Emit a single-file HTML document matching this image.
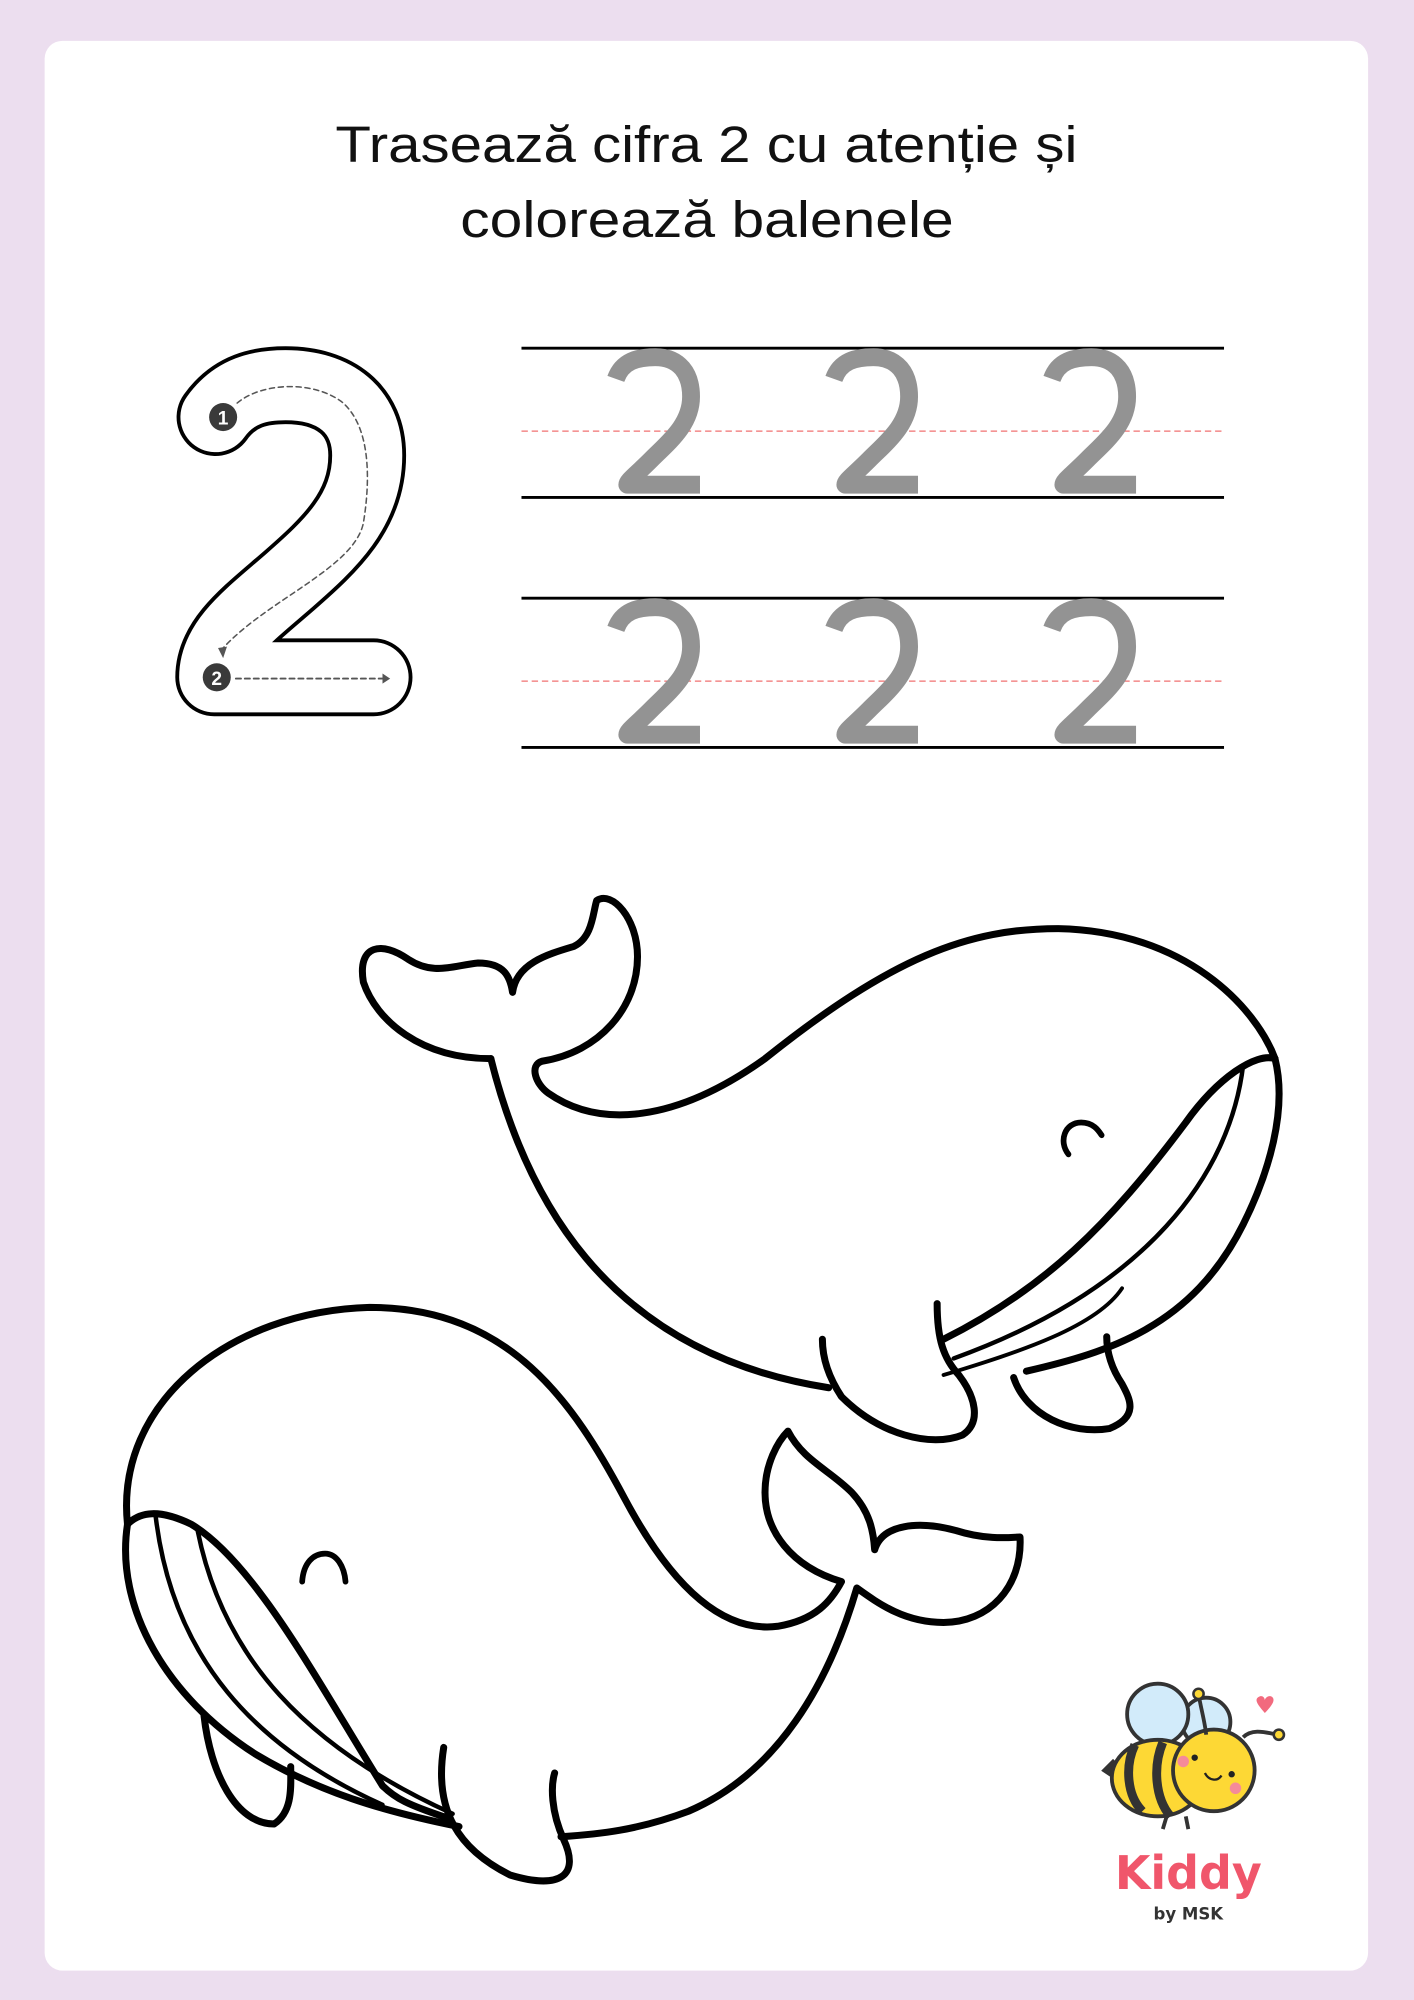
<!DOCTYPE html>
<html><head><meta charset="utf-8"><style>
html,body{margin:0;padding:0;background:#ecdeef;}
svg{display:block}
</style></head><body>
<svg width="1414" height="2000" viewBox="0 0 1109 1568" preserveAspectRatio="none" xmlns="http://www.w3.org/2000/svg">
<rect x="0" y="0" width="1109" height="1568" fill="#ecdeef"/>
<rect x="35" y="32" width="1038" height="1513" rx="14" fill="#ffffff"/>
<g font-family="Liberation Sans, DejaVu Sans, sans-serif" font-size="40" fill="#111">
<text x="263" y="127" textLength="582" lengthAdjust="spacingAndGlyphs">Trasează cifra 2 cu atenție și</text>
<text x="361" y="186" textLength="387" lengthAdjust="spacingAndGlyphs">colorează balenele</text>
</g>
<!-- big outlined 2 -->
<g fill="none" stroke-linecap="round" stroke-linejoin="round">
<path d="M169,327 C184,306 204,302 224,302 C263,302 288,322 288,357 C288,400 259,427 227,455 C196,482 168,502 168,531 L293,531" stroke="#000" stroke-width="61"/>
<path d="M169,327 C184,306 204,302 224,302 C263,302 288,322 288,357 C288,400 259,427 227,455 C196,482 168,502 168,531 L293,531" stroke="#fff" stroke-width="55"/>
<path d="M186,316 C205,300 245,298 268,315 C292,335 290,380 285,410 C278,445 210,470 175,508" stroke="#555" stroke-width="1.2" stroke-dasharray="4,3"/>
<path d="M185,532 L300,532" stroke="#555" stroke-width="1.5" stroke-dasharray="4,3"/>
</g>
<path d="M300,528 L306,532 L300,536 Z" fill="#555"/>
<path d="M171,508 L175,516 L178,507 Z" fill="#555"/>
<circle cx="175" cy="327" r="11" fill="#3a3a3a"/>
<text x="175" y="333" font-family="Liberation Sans, sans-serif" font-weight="bold" font-size="15" fill="#fff" text-anchor="middle">1</text>
<circle cx="170" cy="531" r="11" fill="#3a3a3a"/>
<text x="170" y="537" font-family="Liberation Sans, sans-serif" font-weight="bold" font-size="15" fill="#fff" text-anchor="middle">2</text>
<!-- lines -->
<g stroke="#000" stroke-width="2.2">
<line x1="409" y1="273" x2="960" y2="273"/><line x1="409" y1="390" x2="960" y2="390"/>
<line x1="409" y1="469" x2="960" y2="469"/><line x1="409" y1="586" x2="960" y2="586"/>
</g>
<g stroke="#f07070" stroke-width="1" stroke-dasharray="5,3">
<line x1="409" y1="338" x2="960" y2="338"/><line x1="409" y1="534" x2="960" y2="534"/>
</g>
<defs>
<path id="g2" d="M7,24 C12,10 24,7 38,7 C57,7 66,20 66,38 C66,60 48,74 35,87 C22,100 16,104 16,107 L73,107" fill="none" stroke="#939393" stroke-width="14" stroke-linejoin="round"/>
</defs>
<use href="#g2" x="476" y="273"/><use href="#g2" x="647" y="273"/><use href="#g2" x="818" y="273"/>
<use href="#g2" x="476" y="469"/><use href="#g2" x="647" y="469"/><use href="#g2" x="818" y="469"/>
<!-- whales -->
<g fill="none" stroke="#000" stroke-width="5.5" stroke-linecap="round" stroke-linejoin="round">
<path d="M385,830 C330,830 295,800 285,770 C280,740 300,738 320,752 C340,765 355,757 375,755 C395,755 400,765 402,778 C405,755 430,748 450,742 C465,735 465,715 468,706 C480,698 500,720 500,750 C500,790 470,825 425,832 C415,835 420,850 430,857 C470,885 530,880 600,830 C700,750 760,728 830,728 C930,730 985,790 1000,830"/>
<path d="M385,830 C410,930 470,1060 650,1088"/>
<path d="M1000,830 C1010,870 995,920 975,960 C935,1040 870,1060 805,1075"/>
<path d="M1000,830 C985,825 955,845 930,880 C870,960 820,1010 740,1050"/>
<path d="M975,835 C965,920 900,1010 748,1065" stroke-width="3.5"/>
<path d="M740,1078 C800,1060 860,1040 880,1010" stroke-width="3"/>
<path d="M735,1022 C735,1050 740,1065 752,1078 C765,1095 770,1115 755,1125 C730,1135 690,1125 660,1095 C650,1080 645,1065 645,1050"/>
<path d="M795,1080 C805,1110 840,1125 870,1120 C895,1110 885,1095 880,1085 C872,1073 868,1060 868,1048"/>
<path d="M838,905 C830,895 835,880 848,880 C858,880 862,887 864,890" stroke-width="4.5"/>
<path d="M100,1195 C90,1100 180,1028 290,1025 C400,1025 450,1100 490,1175 C530,1250 570,1280 610,1275 C640,1270 652,1255 660,1240 C620,1228 600,1200 600,1170 C600,1148 610,1130 618,1122 C630,1145 650,1152 668,1170 C682,1185 685,1200 686,1215 C692,1195 720,1192 750,1200 C775,1208 795,1205 800,1205 C802,1245 775,1272 740,1272 C710,1272 690,1258 672,1245 C650,1320 610,1390 540,1420 C500,1435 470,1438 440,1440"/>
<path d="M100,1195 C90,1260 130,1330 200,1375 C250,1405 300,1420 360,1432"/>
<path d="M100,1195 C110,1185 125,1183 150,1195 C200,1225 250,1320 300,1400 C310,1410 320,1415 350,1425" />
<path d="M122,1188 C135,1300 200,1370 300,1415" stroke-width="3.5"/>
<path d="M155,1200 C175,1300 240,1370 355,1422" stroke-width="3.5"/>
<path d="M160,1345 C165,1390 185,1430 215,1430 C230,1420 228,1400 228,1385"/>
<path d="M348,1370 C340,1420 360,1450 400,1470 C440,1482 455,1470 442,1442 C432,1420 432,1400 435,1390"/>
<path d="M237,1240 C238,1225 246,1218 255,1218 C264,1218 270,1228 271,1240" stroke-width="4.5"/>
</g>
<!-- bee logo -->
<g stroke="#333" stroke-width="3">
<circle cx="946" cy="1350" r="19" fill="#d2ebfa"/>
<circle cx="908" cy="1344" r="24" fill="#d2ebfa"/>
<path d="M872,1392 L866,1388 L874,1380" fill="#333"/>
<ellipse cx="908" cy="1394" rx="36" ry="30" fill="#fdd835"/>
<path d="M890,1368 C882,1385 884,1408 896,1420 M912,1366 C904,1385 906,1410 918,1424" stroke-width="7" fill="none"/>
<circle cx="952" cy="1388" r="32" fill="#fdd835"/>
<path d="M975,1362 C982,1355 992,1358 1002,1360" fill="none"/>
<path d="M940,1328 C942,1340 945,1350 946,1360" fill="none"/>
<path d="M915,1424 L912,1434 M930,1424 L932,1434" fill="none"/>
</g>
<circle cx="1003" cy="1360" r="4" fill="#fdd835" stroke="#333" stroke-width="2"/>
<circle cx="940" cy="1328" r="4" fill="#fdd835" stroke="#333" stroke-width="2"/>
<circle cx="937" cy="1378" r="2.5" fill="#222"/><circle cx="966" cy="1391" r="2.5" fill="#222"/>
<circle cx="928" cy="1381" r="4.5" fill="#f58a9a"/><circle cx="969" cy="1402" r="4.5" fill="#f58a9a"/>
<path d="M945,1390 C948,1396 955,1397 958,1392" fill="none" stroke="#222" stroke-width="1.8"/>
<path d="M992,1343 C986,1336 983,1332 988,1330 C991,1329 992,1332 992,1333 C992,1332 994,1329 997,1330 C1001,1332 998,1337 992,1343Z" fill="#f26a7e"/>
<text x="932" y="1481" font-family="DejaVu Sans, Liberation Sans, sans-serif" font-weight="bold" font-size="36" fill="#f0566b" text-anchor="middle">Kiddy</text>
<text x="932" y="1505" font-family="DejaVu Sans, Liberation Sans, sans-serif" font-weight="bold" font-size="13" fill="#333" text-anchor="middle">by MSK</text>
</svg>
</body></html>
